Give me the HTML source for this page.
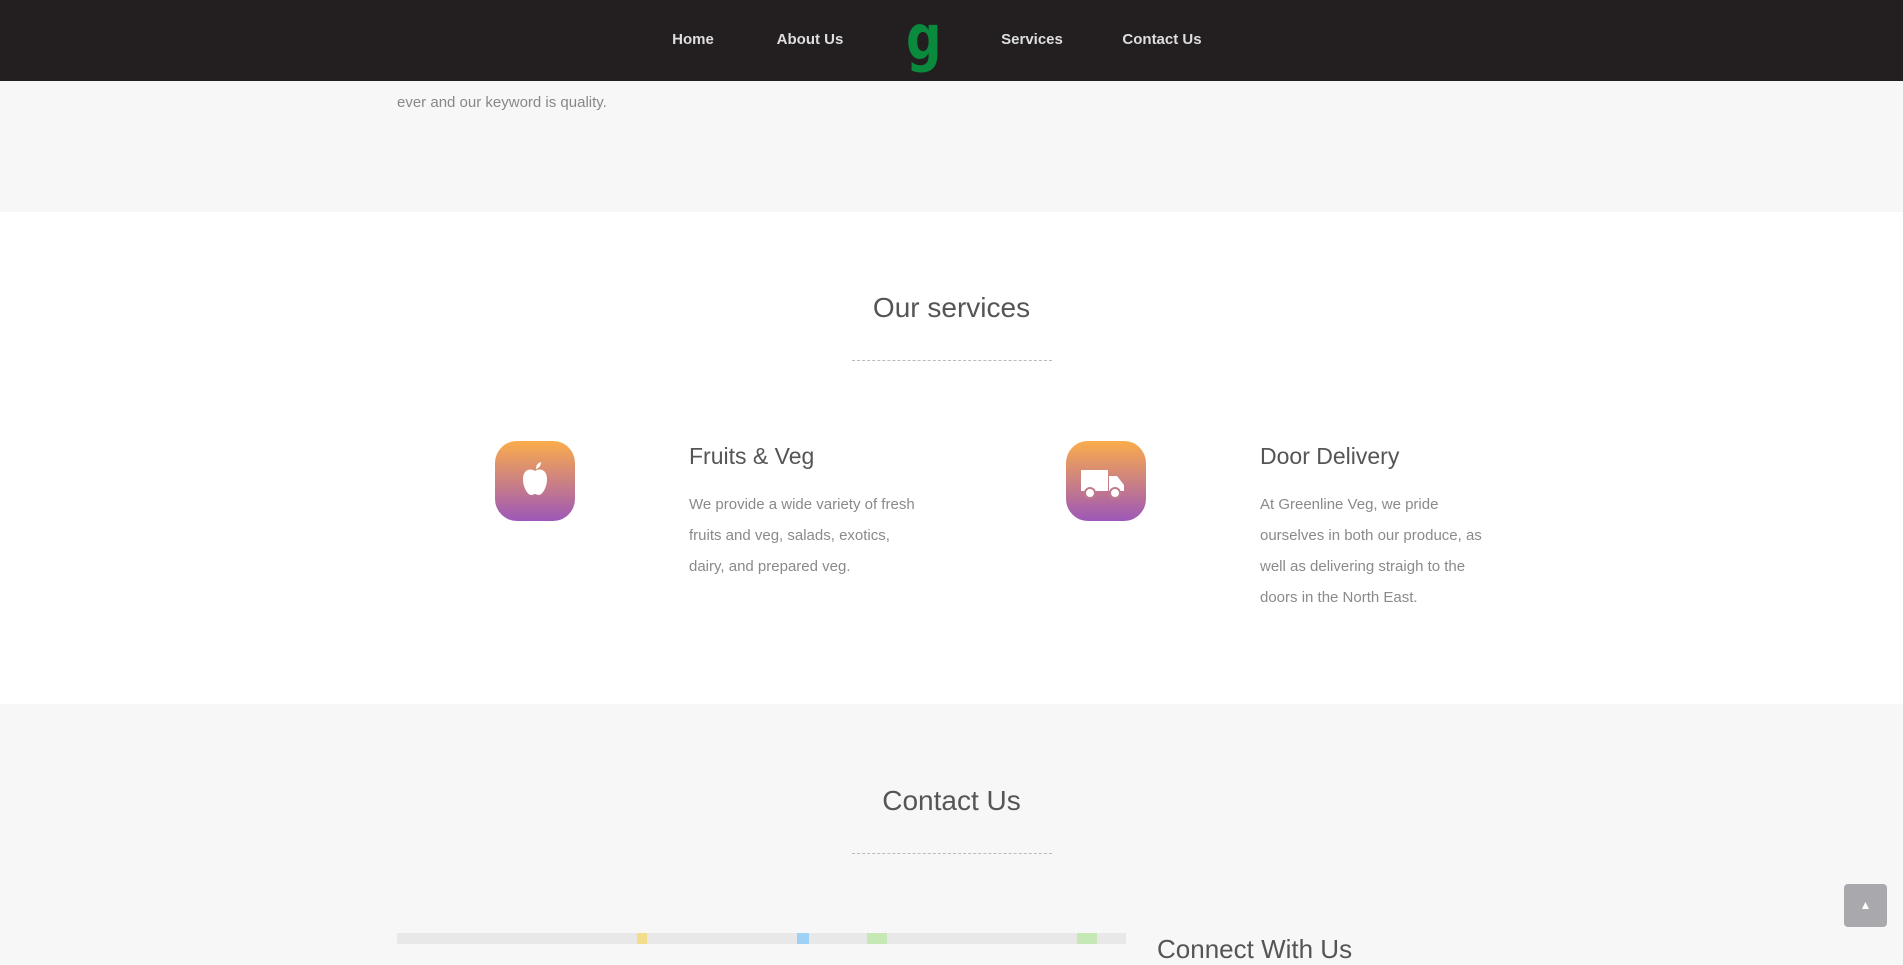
<!DOCTYPE html>
<html><head><meta charset="utf-8"><style>
*{margin:0;padding:0;box-sizing:border-box}
body{width:1903px;height:944px;overflow:hidden;background:#f7f7f7;font-family:"Liberation Sans",sans-serif;position:relative}
.nav{position:absolute;left:0;top:0;width:1903px;height:81px;background:#231f20;z-index:5}
.nav a{position:absolute;top:31px;color:#dedede;font-weight:bold;font-size:15px;text-decoration:none;transform:translateX(-50%)}
.logo{position:absolute;left:906px;top:8px;font-size:62px;line-height:60px;color:#0a8a3c;font-family:"DejaVu Sans",sans-serif;font-weight:bold;transform:scaleX(0.8);transform-origin:left}
.t{position:absolute;color:#888;font-size:15px}
.white{position:absolute;left:0;top:212px;width:1903px;height:492px;background:#fff}
h2{position:absolute;left:0;width:1903px;text-align:center;font-weight:normal;color:#555;font-size:28px}
.dot{position:absolute;left:852px;width:200px;border-top:1px dashed #bbb}
.ic{position:absolute;width:80px;height:80px;border-radius:22px;background:linear-gradient(#fbac4b,#9d57b8);top:441px}
h3{position:absolute;font-weight:normal;color:#555;font-size:23px;top:443px}
p{position:absolute;color:#8a8a8a;font-size:15px;line-height:31px;top:489px;width:235px}
</style></head><body>
<div class="nav">
<a style="left:693px">Home</a><a style="left:810px">About Us</a>
<div class="logo">g</div>
<a style="left:1032px">Services</a><a style="left:1162px">Contact Us</a>
</div>
<div class="t" style="left:397px;top:94px">ever and our keyword is quality.</div>
<div class="white">
</div>
<h2 style="top:292px">Our services</h2>
<div class="dot" style="top:360px"></div>
<div class="ic" style="left:495px"><svg width="80" height="80" viewBox="0 0 80 80"><path d="M40 30c-4-3-12-2-12 8 0 9 5 16 8 16 2 0 3-1 4-1s2 1 4 1c3 0 8-7 8-16 0-10-8-11-12-8zM41 28c0-4 2-6 5-7 0 4-2 6-5 7z" fill="#fff"/></svg></div>
<h3 style="left:689px">Fruits &amp; Veg</h3>
<p style="left:689px">We provide a wide variety of fresh fruits and veg, salads, exotics, dairy, and prepared veg.</p>
<div class="ic" style="left:1066px"><svg width="80" height="80" viewBox="0 0 80 80"><path d="M15 29h27v21H15zM43 35h8l7 9v6H43z" fill="#fff"/><circle cx="24" cy="52" r="5" fill="#fff" stroke="#c07a8a" stroke-width="2"/><circle cx="49" cy="52" r="5" fill="#fff" stroke="#c07a8a" stroke-width="2"/></svg></div>
<h3 style="left:1260px">Door Delivery</h3>
<p style="left:1260px">At Greenline Veg, we pride ourselves in both our produce, as well as delivering straigh to the doors in the North East.</p>
<h2 style="top:785px">Contact Us</h2>
<div class="dot" style="top:853px"></div>
<div style="position:absolute;left:397px;top:933px;width:729px;height:11px;background:#e8e8e8;overflow:hidden">
<div style="position:absolute;left:240px;width:10px;height:11px;background:#f3dc8a"></div>
<div style="position:absolute;left:400px;width:12px;height:11px;background:#9fd0f5"></div>
<div style="position:absolute;left:470px;width:20px;height:11px;background:#c5e8b5"></div>
<div style="position:absolute;left:680px;width:20px;height:11px;background:#c5e8b5"></div>
</div>
<div style="position:absolute;left:1157px;top:934px;font-size:26px;color:#555">Connect With Us</div>
<div style="position:absolute;left:1844px;top:884px;width:43px;height:43px;background:#a8a8ad;border-radius:4px;color:#fff;text-align:center;line-height:43px;font-size:12px">▲</div>
</body></html>
